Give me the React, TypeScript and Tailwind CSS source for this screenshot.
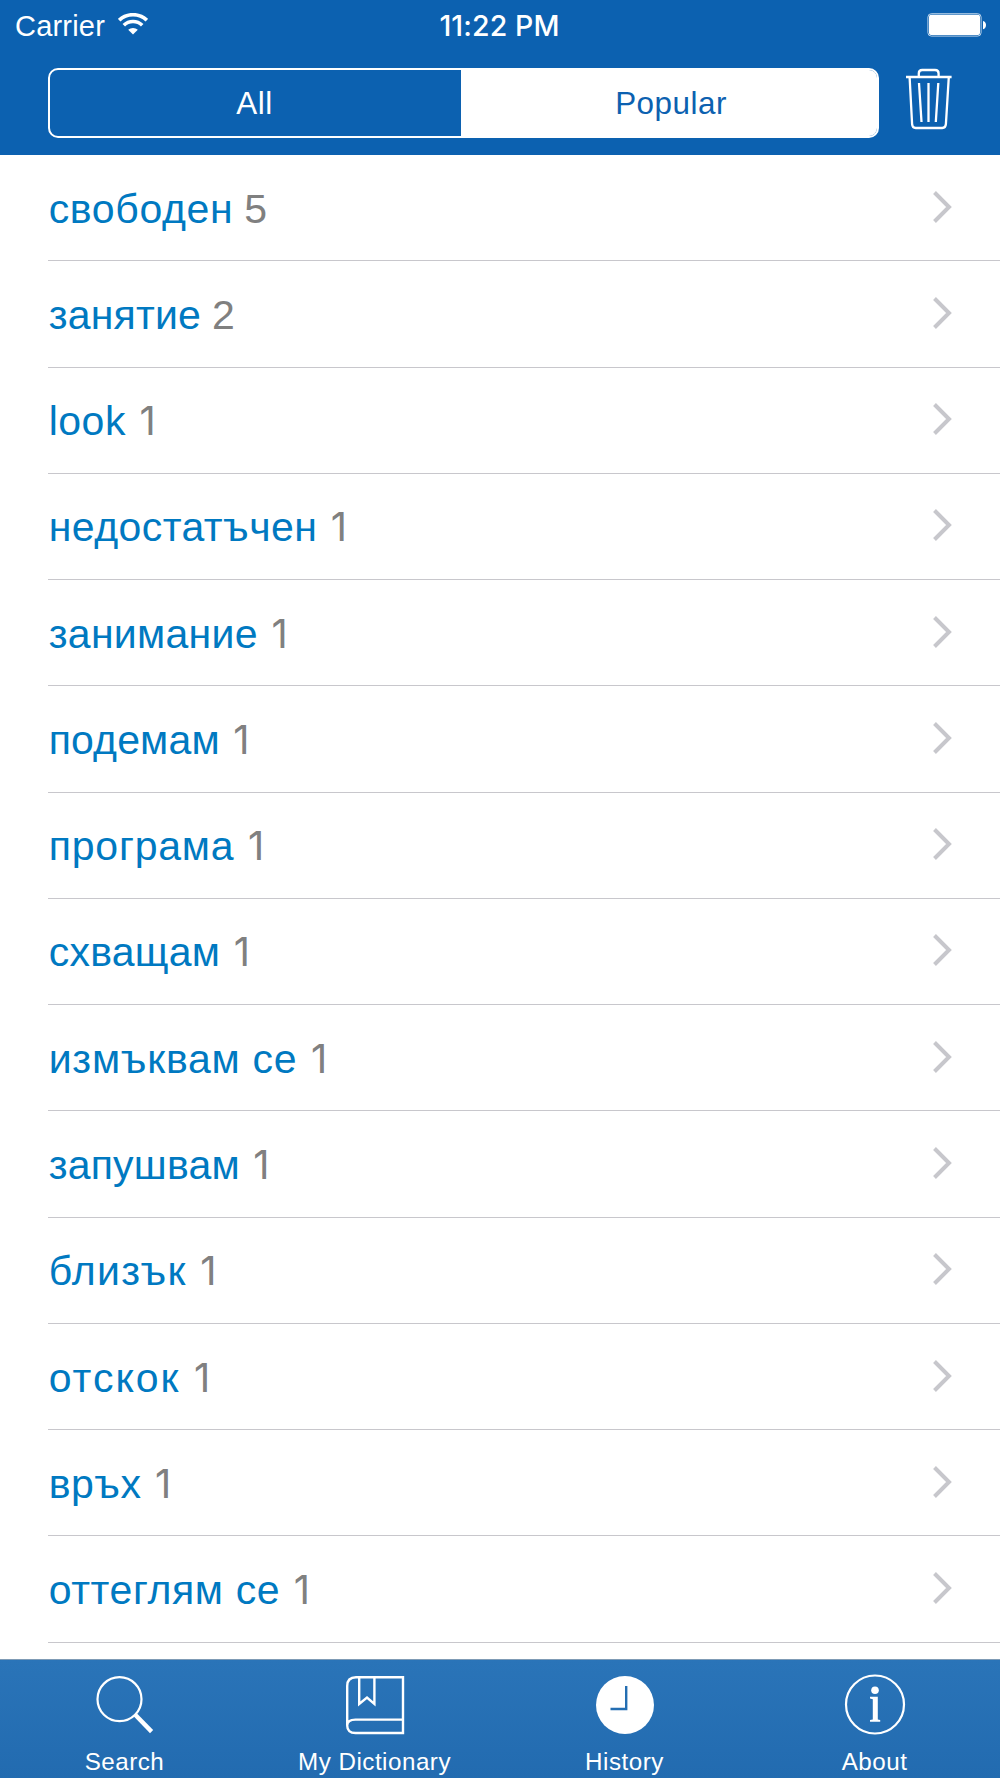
import { useState } from "react";

interface IEntry {
  word: string;
  count: number;
  tracking: string;
}

const entries: IEntry[] = [
  { word: "свободен", count: 5, tracking: "tracking-[0.65px]" },
  { word: "занятие", count: 2, tracking: "tracking-[0.2px]" },
  { word: "look", count: 1, tracking: "tracking-[0.5px]" },
  { word: "недостатъчен", count: 1, tracking: "tracking-[0.45px]" },
  { word: "занимание", count: 1, tracking: "tracking-[0.3px]" },
  { word: "подемам", count: 1, tracking: "tracking-[0.15px]" },
  { word: "програма", count: 1, tracking: "tracking-[0.8px]" },
  { word: "схващам", count: 1, tracking: "tracking-[0.25px]" },
  { word: "измъквам се", count: 1, tracking: "tracking-[0.75px]" },
  { word: "запушвам", count: 1, tracking: "tracking-[0.2px]" },
  { word: "близък", count: 1, tracking: "tracking-[1.35px]" },
  { word: "отскок", count: 1, tracking: "tracking-[2px]" },
  { word: "връх", count: 1, tracking: "tracking-[0.5px]" },
  { word: "оттеглям се", count: 1, tracking: "tracking-[0.6px]" },
];

const WifiIcon = () => (
  <svg width="30" height="22" viewBox="0 0 30 22" fill="none">
    <path d="M1.2 7.2A20 20 0 0 1 28.8 7.2" stroke="white" strokeWidth="3.6" />
    <path d="M5.8 12.2A13.2 13.2 0 0 1 24.2 12.2" stroke="white" strokeWidth="3.6" />
    <path d="M10.2 16.8A7 7 0 0 1 19.8 16.8L15 21.6Z" fill="white" />
  </svg>
);

const BatteryIcon = () => (
  <svg width="60" height="24" viewBox="0 0 60 24" fill="none">
    <rect x="0.9" y="0.7" width="53.2" height="22.4" rx="3.5" stroke="white" strokeOpacity="0.7" />
    <rect x="2" y="1.8" width="51" height="20.2" rx="2" fill="white" />
    <path d="M56 8C60 8.6 60 15.6 56 16.2Z" fill="white" />
  </svg>
);

const TrashIcon = () => (
  <svg width="46" height="62" viewBox="0 0 46 62" fill="none" stroke="white" strokeWidth="2.3">
    <path d="M0 9H45.6" />
    <path d="M12.8 9V5.4Q12.8 2 16.2 2H29Q32.6 2 32.6 5.4V9" />
    <path d="M3.6 9L6.1 56.2Q6.4 60 9.7 60H36.3Q39.6 60 39.9 56.2L42.8 9" />
    <path d="M13 15L15.5 54M22.5 15V54M32.3 15L29.8 54" />
  </svg>
);

const Chevron = () => (
  <svg className="mb-[2px]" width="20" height="32" viewBox="0 0 20 32" fill="none">
    <path d="M1.5 1.5L16 16L1.5 30.5" stroke="#c7c7cc" strokeWidth="4" />
  </svg>
);

const SearchIcon = () => (
  <svg width="62" height="62" viewBox="0 0 62 62" fill="none" stroke="white">
    <circle cx="25.5" cy="26.2" r="22" strokeWidth="2.2" />
    <path d="M41.2 41.8L57.6 58.6" strokeWidth="4.4" />
  </svg>
);

const BookIcon = () => (
  <svg width="60" height="62" viewBox="0 0 60 62" fill="none" stroke="white" strokeWidth="2.4">
    <path d="M2.2 52V13Q2.2 4.2 11 4.2H58V60H10.5Q2.2 60 2.2 52.5Q2.2 46.6 10.5 46.6H58" />
    <path d="M14.2 4V31L22 24.6L29.4 31V4" />
  </svg>
);

const HistoryIcon = () => (
  <svg width="60" height="62" viewBox="0 0 60 62" fill="none">
    <circle cx="30" cy="32" r="29" fill="white" />
    <path d="M31.2 13V36H15.5" stroke="#246eb2" strokeWidth="2.4" />
  </svg>
);

const AboutIcon = () => (
  <svg width="62" height="62" viewBox="0 0 62 62" fill="none">
    <circle cx="31" cy="31.5" r="29" stroke="white" strokeWidth="2.2" />
    <circle cx="31" cy="17.3" r="3.8" fill="white" />
    <path d="M26 23.8H33.8V46.5L36.2 47V48.8H26V47L28.8 46.5V26.2L26 25.6Z" fill="white" />
  </svg>
);

const tabs = [
  { label: "Search", icon: <SearchIcon /> },
  { label: "My Dictionary", icon: <BookIcon /> },
  { label: "History", icon: <HistoryIcon /> },
  { label: "About", icon: <AboutIcon /> },
];

const filters = [
  { name: "All", className: "w-[411px] pr-[2px]" },
  { name: "Popular", className: "flex-1 pl-[4px]" },
];

const App = () => {
  const [filter, setFilter] = useState<string>("Popular");

  return (
    <div className="flex flex-col w-[1000px] h-[1778px] overflow-hidden bg-white font-['Liberation_Sans',Arial,sans-serif]">
      <header className="h-[155px] shrink-0 bg-[#0c61b0] text-white">
        <div className="grid grid-cols-3 items-center h-[50px] pl-[15px] pr-[13px]">
          <div className="flex items-center gap-[13px]">
            <span className="pt-[2px] text-[29px] leading-none tracking-[0.2px]">Carrier</span>
            <span className="-mt-0.5">
              <WifiIcon />
            </span>
          </div>
          <span className="pt-[2px] -ml-[3px] text-center text-[28.5px] leading-none tracking-[0.1px] font-medium font-['Inter',sans-serif]">
            11:22 PM
          </span>
          <div className="flex justify-end">
            <BatteryIcon />
          </div>
        </div>

        <div className="flex items-start pt-[18px] pl-[48px]">
          <div className="flex w-[831px] h-[70px] rounded-[10px] border-[2.4px] border-white overflow-hidden">
            {filters.map(({ name, className }) => (
              <button
                key={name}
                onClick={() => setFilter(name)}
                className={`${className} pt-[2px] text-[31.4px] leading-none tracking-[0.5px] ${
                  filter === name ? "bg-white text-[#0c61b0]" : "text-white"
                }`}>
                {name}
              </button>
            ))}
          </div>
          <button className="ml-[27px]">
            <TrashIcon />
          </button>
        </div>
      </header>

      <ul className="flex-1 min-h-0 overflow-hidden">
        {entries.map(({ word, count, tracking }) => (
          <li
            key={word}
            className="flex items-center justify-between h-[106.28px] ml-[48px] pr-[47.5px] border-b border-[#c8c7cc]">
            <p className="flex items-baseline pt-[3px] pl-[0.7px] text-[41px] leading-none text-[#0079c1]">
              <span className={tracking}>{word}</span>
              <span
                className={`text-[#808080] ${
                  count === 1 ? "ml-[13.5px] text-[40px] font-['Inter',sans-serif]" : "ml-[11px]"
                }`}>
                {count}
              </span>
            </p>
            <Chevron />
          </li>
        ))}
      </ul>

      <nav className="grid grid-cols-4 h-[119px] shrink-0 border-t border-[#7f9bb5] bg-linear-to-b from-[#2a74b8] to-[#226bb0] text-white">
        {tabs.map(({ label, icon }) => (
          <button key={label} className="flex flex-col items-center pt-[13px]">
            {icon}
            <span className="mt-[14px] pr-px text-[24.2px] leading-[26px] tracking-[0.5px]">{label}</span>
          </button>
        ))}
      </nav>
    </div>
  );
};

export default App;
